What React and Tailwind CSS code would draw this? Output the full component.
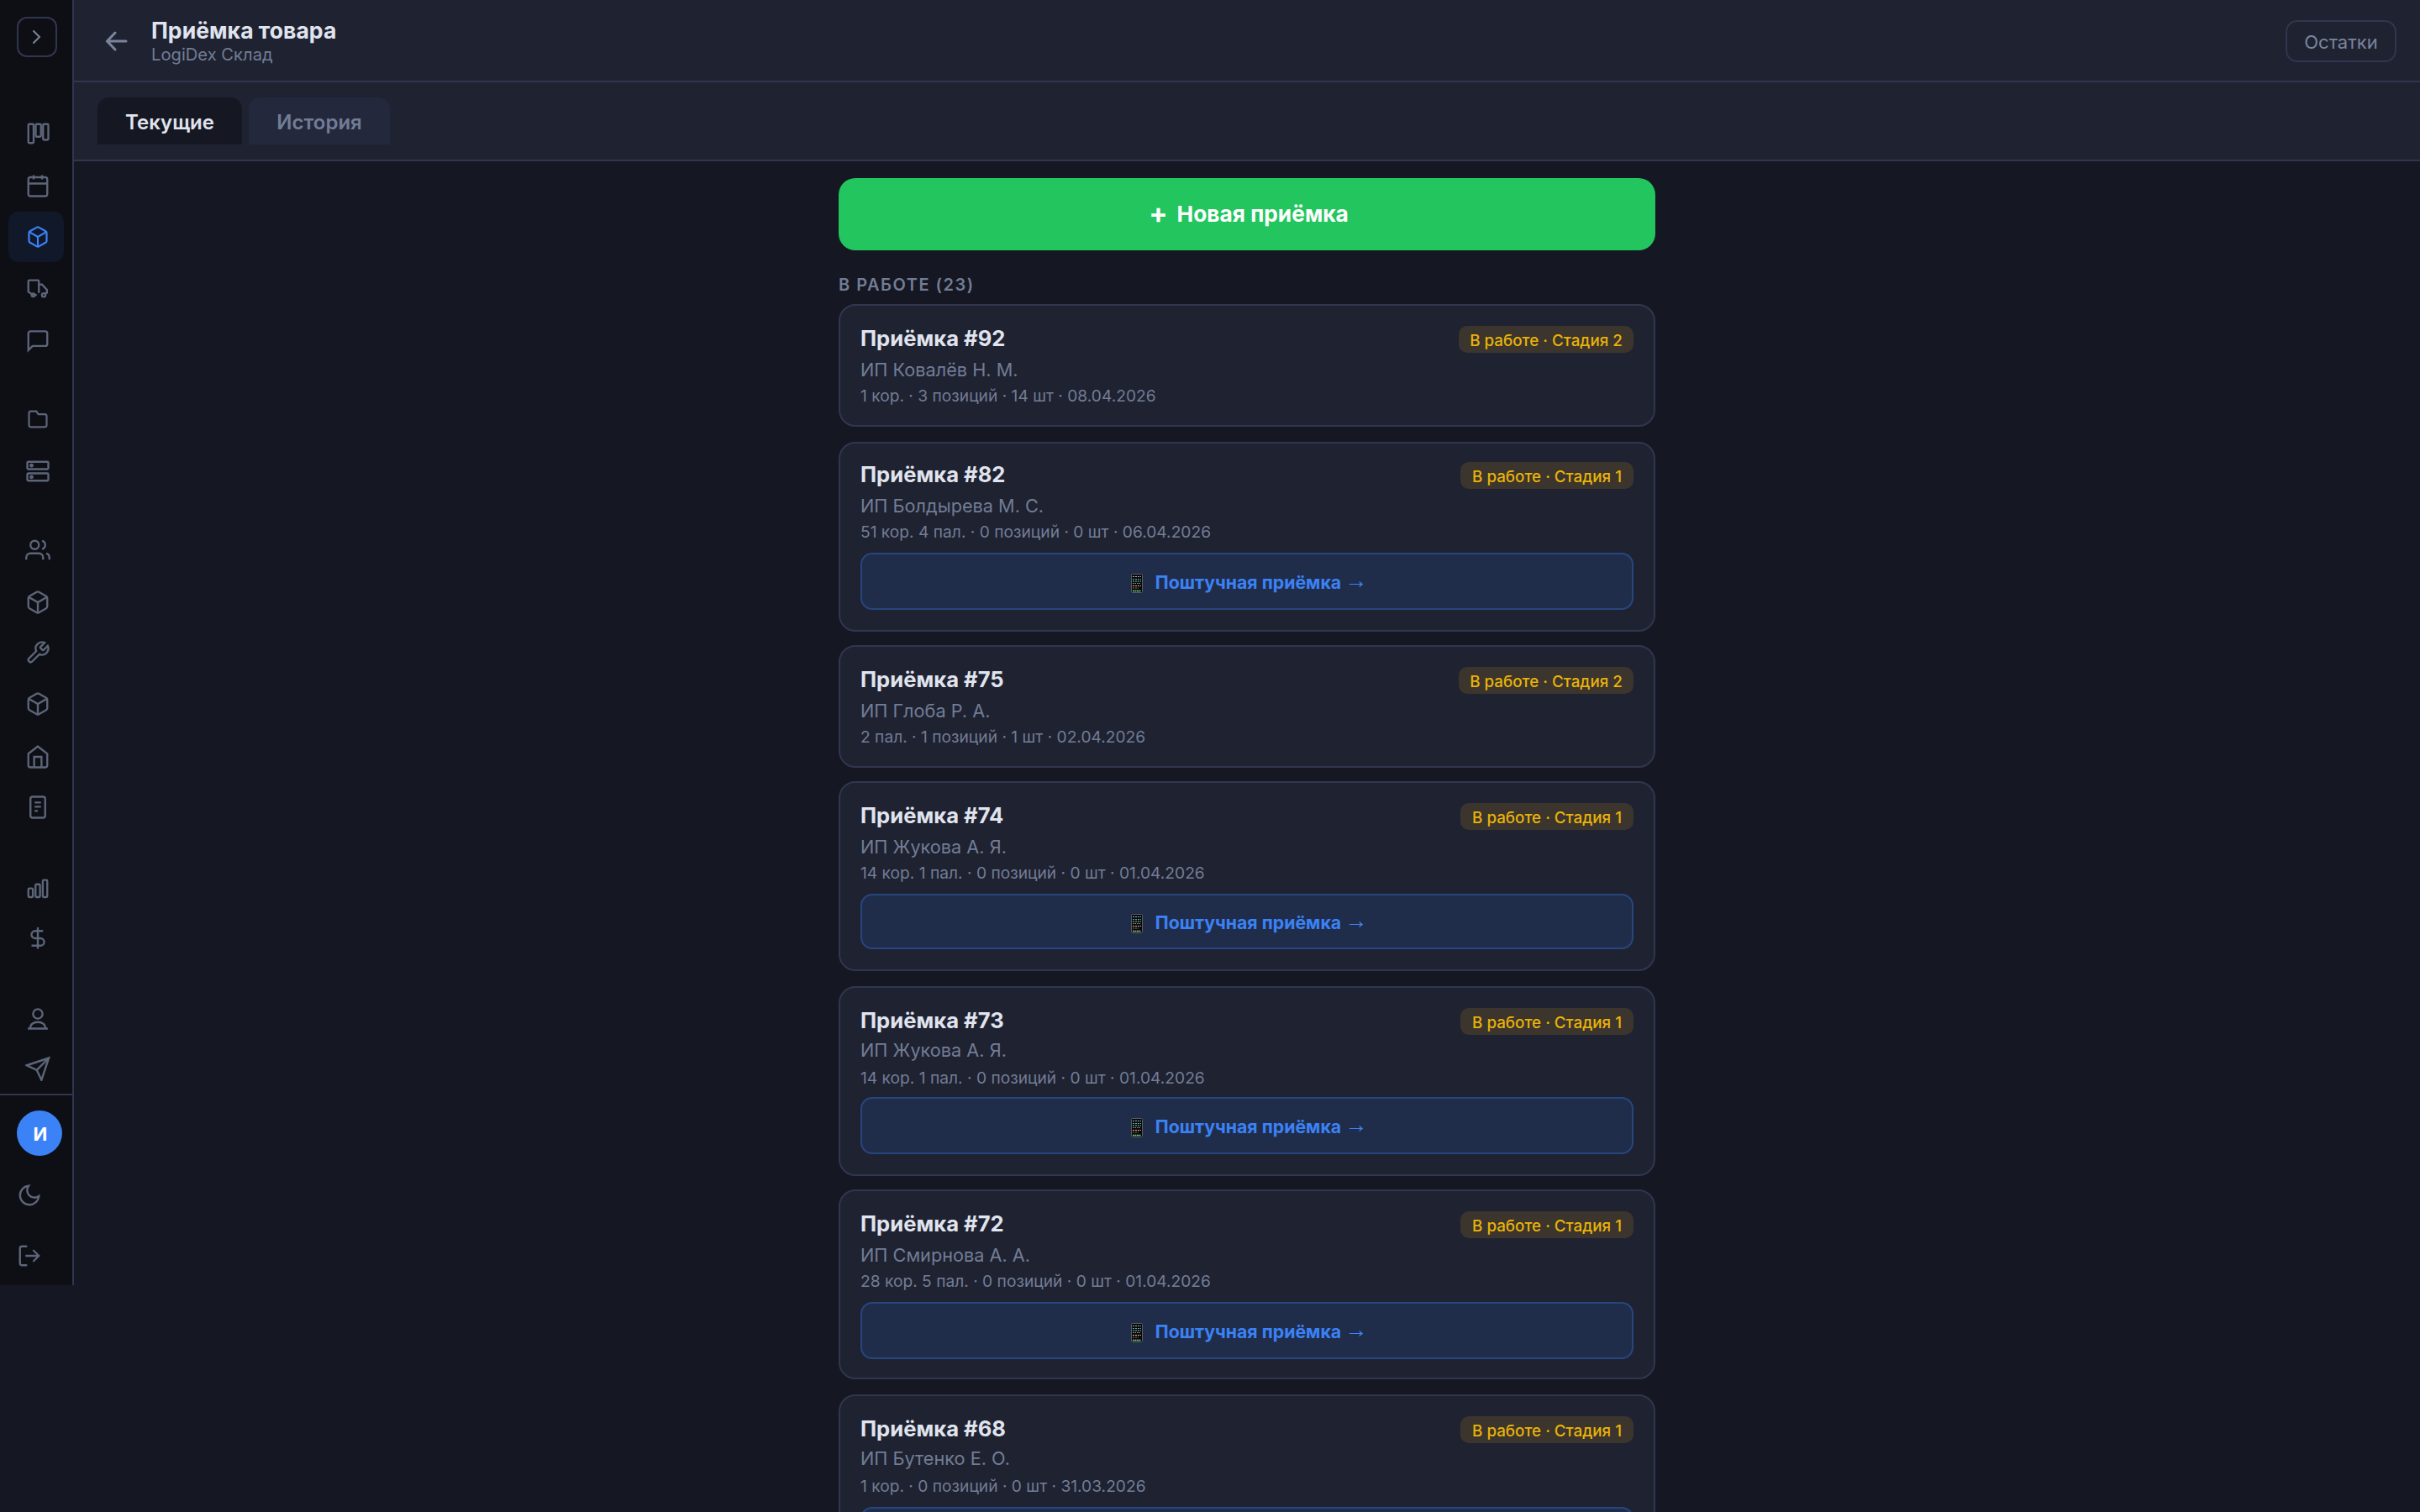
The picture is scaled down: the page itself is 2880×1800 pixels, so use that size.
import React from 'react';
import { clsx } from 'clsx';

const icons = {
  board: (
    <>
      <rect x="3" y="3" width="5" height="18" rx="1" />
      <rect x="10" y="3" width="5" height="12" rx="1" />
      <rect x="17" y="3" width="5" height="15" rx="1" />
    </>
  ),
  calendar: (
    <>
      <rect x="3" y="4" width="18" height="18" rx="2" />
      <path d="M16 2v4M8 2v4M3 10h18" />
    </>
  ),
  box: (
    <>
      <path d="M21 16V8a2 2 0 0 0-1-1.73l-7-4a2 2 0 0 0-2 0l-7 4A2 2 0 0 0 3 8v8a2 2 0 0 0 1 1.73l7 4a2 2 0 0 0 2 0l7-4A2 2 0 0 0 21 16z" />
      <path d="M3.27 6.96 12 12.01l8.73-5.05M12 22.08V12" />
    </>
  ),
  truck: (
    <>
      <path d="M7.5 18.500 3 15.500V5.500a1 1 0 0 1 1-1h8a1 1 0 0 1 1 1V16.500M7.500 18.500H11" />
      <path d="M13 8.500h3l4.700 5v3l-2 1" />
      <circle cx="7.6" cy="18.600" r="1.500" />
      <circle cx="17.600" cy="18.600" r="1.700" />
    </>
  ),
  chat: <path d="M21 15.500a2 2 0 0 1-2 2H7l-4 4V5.500a2 2 0 0 1 2-2h14a2 2 0 0 1 2 2z" />,
  folder: <path d="M19 20a2 2 0 0 0 2-2V9a2 2 0 0 0-2-2h-6.500l-2-3H5a2 2 0 0 0-2 2v12a2 2 0 0 0 2 2z" />,
  server: (
    <>
      <rect x="2" y="3" width="20" height="7" rx="1" />
      <rect x="2" y="14" width="20" height="7" rx="1" />
      <circle cx="6" cy="6.500" r="1" />
      <circle cx="6" cy="17.500" r="1" />
    </>
  ),
  users: (
    <>
      <path d="M17 21v-2a4 4 0 0 0-4-4H5a4 4 0 0 0-4 4v2" />
      <circle cx="9" cy="7" r="4" />
      <path d="M23 21v-2a4 4 0 0 0-3-3.87M16 3.13a4 4 0 0 1 0 7.75" />
    </>
  ),
  wrench: (
    <path d="M14.7 6.3a1 1 0 0 0 0 1.4l1.6 1.6a1 1 0 0 0 1.4 0l3.77-3.77a6 6 0 0 1-7.94 7.94l-6.91 6.91a2.12 2.12 0 0 1-3-3l6.91-6.91a6 6 0 0 1 7.94-7.94l-3.76 3.76z" />
  ),
  home: (
    <>
      <path d="m3 9 9-7 9 7v11a2 2 0 0 1-2 2H5a2 2 0 0 1-2-2z" />
      <path d="M8.500 22V12h7v10" />
    </>
  ),
  doc: (
    <>
      <rect x="5" y="2" width="14" height="20" rx="2" />
      <path d="M9 7.500h6M9 11.500h6M9 15.500h3" />
    </>
  ),
  bars: (
    <>
      <rect x="3" y="11.700" width="4.300" height="8.300" rx="1" />
      <rect x="9.800" y="7.800" width="4.300" height="12.200" rx="1" />
      <rect x="16.700" y="3.700" width="4.300" height="16.300" rx="1" />
    </>
  ),
  dollar: <path d="M12 1.500v20.500M17 5H9.500a3.500 3.500 0 0 0 0 7h5a3.500 3.500 0 0 1 0 7H6" />,
  user: (
    <>
      <circle cx="12" cy="8" r="4.500" />
      <path d="M2.500 22h19M4.800 22c0-4 3-6.200 7.200-6.200s7.200 2.200 7.200 6.200" />
    </>
  ),
  send: <path d="M22.500 2 11 13.500M22.500 2l-7 21-4.500-9.500L1.500 9z" />,
  moon: <path d="M21 12.790A9 9 0 1 1 11.210 3 7 7 0 0 0 21 12.790z" />,
  logout: <path strokeLinecap="round" d="M9 21H5a2 2 0 0 1-2-2V5a2 2 0 0 1 2-2h4M16 17l5-5-5-5M21 12H9" />,
};

const Icon = ({ name, className }) => (
  <svg
    viewBox="0 0 24 24"
    fill="none"
    stroke="currentColor"
    strokeWidth="1.9"
    className={clsx('shrink-0', className)}
  >
    {icons[name]}
  </svg>
);

const navItems = [
  { icon: 'board', cls: 'mt-[60px] h-[62px]' },
  { icon: 'calendar', cls: 'h-[62px]' },
  { icon: 'box', cls: 'h-[60px]', active: true },
  { icon: 'truck', cls: 'h-[62px]' },
  { icon: 'chat', cls: 'h-[62px]' },
  { icon: 'folder', cls: 'mt-[32px] h-[62px]', small: true },
  { icon: 'server', cls: 'h-[62px]' },
  { icon: 'users', cls: 'mt-[32px] h-[62px]' },
  { icon: 'box', cls: 'h-[62px]' },
  { icon: 'wrench', cls: 'h-[58px]' },
  { icon: 'box', cls: 'h-[64px]' },
  { icon: 'home', cls: 'h-[62px]' },
  { icon: 'doc', cls: 'h-[58px]' },
  { icon: 'bars', cls: 'mt-[38px] h-[60px]' },
  { icon: 'dollar', cls: 'h-[58px]' },
  { icon: 'user', cls: 'mt-[36px] h-[60px]' },
  { icon: 'send', cls: 'h-[60px]' },
];

const receipts = [
  {
    id: 92,
    client: 'ИП Ковалёв Н. М.',
    info: '1 кор. · 3 позиций · 14 шт · 08.04.2026',
    stage: 2,
    card: 'h-[146px] pt-[23px] mb-[18px]',
  },
  {
    id: 82,
    client: 'ИП Болдырева М. С.',
    info: '51 кор. 4 пал. · 0 позиций · 0 шт · 06.04.2026',
    stage: 1,
    card: 'h-[226px] pt-[21px] mb-4',
  },
  {
    id: 75,
    client: 'ИП Глоба Р. А.',
    info: '2 пал. · 1 позиций · 1 шт · 02.04.2026',
    stage: 2,
    card: 'h-[146px] pt-[23px] mb-4',
  },
  {
    id: 74,
    client: 'ИП Жукова А. Я.',
    info: '14 кор. 1 пал. · 0 позиций · 0 шт · 01.04.2026',
    stage: 1,
    card: 'h-[226px] pt-[23px] mb-[18px]',
    action: 'mt-[9px] h-[66px]',
  },
  {
    id: 73,
    client: 'ИП Жукова А. Я.',
    info: '14 кор. 1 пал. · 0 позиций · 0 шт · 01.04.2026',
    stage: 1,
    card: 'h-[226px] pt-[23px] mb-4',
    lines: 'mt-0.5 mb-px',
    action: 'mt-[7px] h-[68px]',
  },
  {
    id: 72,
    client: 'ИП Смирнова А. А.',
    info: '28 кор. 5 пал. · 0 позиций · 0 шт · 01.04.2026',
    stage: 1,
    card: 'h-[226px] pt-[23px] mb-[18px]',
  },
  {
    id: 68,
    client: 'ИП Бутенко Е. О.',
    info: '1 кор. · 0 позиций · 0 шт · 31.03.2026',
    stage: 1,
    card: 'h-[226px] pt-[23px]',
    lines: 'mt-0.5 mb-px',
  },
];

const Sidebar = () => (
  <aside className="flex h-[1530px] w-[88px] shrink-0 flex-col border-r-2 border-[#30364e] bg-[#0d0f14] text-[#5d6579]">
    <button className="mt-5 ml-5 flex size-12 shrink-0 items-center justify-center rounded-xl border-2 border-[#30364e] text-[#7a859c]">
      <svg viewBox="0 0 24 24" fill="none" stroke="currentColor" strokeWidth="2" strokeLinecap="round" className="size-6">
        <path d="m8 5 7 7-7 7" />
      </svg>
    </button>
    {navItems.map((item, i) => (
      <div
        key={i}
        className={clsx(
          'ml-2.5 flex w-[66px] shrink-0 items-center justify-center rounded-xl pl-1',
          item.cls,
          item.active && 'bg-[#111829] text-[#3b82f6]'
        )}
      >
        <Icon name={item.icon} className={item.active || item.small ? 'size-7' : 'size-[30px]'} />
      </div>
    ))}
    <div className="mt-auto h-[228px] shrink-0 border-t-2 border-[#30364e]">
      <div className="mt-[18px] ml-5 flex size-[54px] items-center justify-center rounded-full bg-[#3b82f6] pt-0.5 pl-0.5 text-[22px] font-bold text-white">
        И
      </div>
      <Icon name="moon" className="mt-[32px] ml-5 size-[30px]" />
      <Icon name="logout" className="mt-[42px] ml-5 size-[30px]" />
    </div>
  </aside>
);

const PhoneIcon = () => (
  <svg viewBox="0 0 14 23" className="h-[23px] w-3.5">
    <rect x="0.500" y="0.500" width="13" height="22" rx="1" fill="#08090c" stroke="#5a5d62" />
    <path d="M2 3.500h10" stroke="#8fc496" strokeDasharray="2 1" />
    <path d="M2 6.500h10" stroke="#4aa5dd" strokeDasharray="2 1" />
    <path d="M2 9h10" stroke="#d9b35c" strokeDasharray="2 1" />
    <path d="M2 11.500h10" stroke="#3fb3c4" strokeDasharray="1.500 1" />
    <path d="M2 14.500h10" stroke="#e0b896" strokeDasharray="2 1" />
    <path d="M2 17h7" stroke="#d0574a" strokeDasharray="2 1" />
    <path d="M2 20.500h10" stroke="#6ee08a" strokeWidth="1.500" strokeDasharray="2 0.500" />
  </svg>
);

const ReceiptCard = ({ receipt }) => (
  <div className={clsx('rounded-[20px] border-2 border-[#30364e] bg-[#1f2231] px-6', receipt.card)}>
    <div className="flex items-start justify-between">
      <h3 className="text-[25.600px] leading-8 font-bold text-[#e0e4ee]">Приёмка #{receipt.id}</h3>
      <span
        className={clsx(
          'mt-px h-8 rounded-[10px] bg-[#3b352d] text-center text-[18.800px] leading-[35px] font-medium whitespace-nowrap text-[#eab308]',
          receipt.stage === 1 ? 'w-[206px]' : 'w-[208px]'
        )}
      >
        В работе · Стадия {receipt.stage}
      </span>
    </div>
    <p className={clsx('text-[21.700px] leading-8 text-[#727d95]', receipt.lines || 'mt-1 -mb-px')}>{receipt.client}</p>
    <p className="text-[19.200px] leading-8 text-[#727d95]">{receipt.info}</p>
    {receipt.stage === 1 && (
      <button
        className={clsx(
          'flex w-full items-center justify-center rounded-[14px] border-2 border-[#27467f] bg-[#202d4a] pt-1 pl-[5px] text-[21.300px] font-bold text-[#3b82f6]',
          receipt.action || 'mt-[9px] h-[68px]'
        )}
      >
        <PhoneIcon />
        <span className="ml-[15px]">Поштучная приёмка</span>
        <span className="ml-1 pb-[7px] font-['Liberation_Sans',sans-serif] text-[27px] leading-7 font-normal">→</span>
      </button>
    )}
  </div>
);

export default function App() {
  return (
    <div className="flex h-[1800px] w-[2880px] overflow-hidden bg-[#151722] font-['Inter',sans-serif]">
      <Sidebar />
      <div className="flex min-w-0 flex-1 flex-col">
        {/* Header */}
        <header className="flex h-[98px] shrink-0 items-center border-b-2 border-[#30364e] bg-[#1f2231] pt-0.5 pr-7 pl-9">
          <svg viewBox="0 0 28 24" fill="none" stroke="#7a859c" strokeWidth="3" strokeLinecap="round" className="h-6 w-7">
            <path d="M3.500 12H26M13 2 3.500 12l9.500 10" />
          </svg>
          <div className="ml-7 flex-1">
            <h1 className="-mt-px mb-px text-[26.600px] leading-8 font-bold text-[#e0e4ee]">Приёмка товара</h1>
            <p className="text-[20.200px] leading-6 text-[#727d95]">LogiDex Склад</p>
          </div>
          <button className="h-[50px] w-[132px] rounded-[14px] border-2 border-[#30364e] pt-0.5 text-[22px] text-[#7a859c]">Остатки</button>
        </header>

        {/* Tabs */}
        <div className="flex h-[94px] shrink-0 gap-2 border-b-2 border-[#30364e] bg-[#1f2231] pt-[18px] pl-7">
          <button className="h-14 w-[172px] rounded-t-[14px] bg-[#151722] pt-[3px] text-[24px] font-semibold text-[#e0e4ee]">Текущие</button>
          <button className="h-14 w-[168px] rounded-t-[14px] bg-[#23283d] pt-[3px] text-[24px] font-semibold text-[#727d95]">История</button>
        </div>

        {/* Receipts list */}
        <main className="mx-auto w-[972px] pt-5">
          <button className="flex h-[86px] w-full items-center justify-center gap-[11px] rounded-[20px] bg-[#22c55e] pl-1 text-[26.300px] font-bold text-white">
            <span className="pb-0.5 text-[33px] leading-8">+</span>
            <span>Новая приёмка</span>
          </button>
          <h2 className="mt-[26px] mb-2 h-[30px] text-[20px] leading-[30px] font-semibold tracking-[1.500px] text-[#727d95]">В РАБОТЕ (23)</h2>
          {receipts.map((receipt) => (
            <ReceiptCard key={receipt.id} receipt={receipt} />
          ))}
        </main>
      </div>
    </div>
  );
}
